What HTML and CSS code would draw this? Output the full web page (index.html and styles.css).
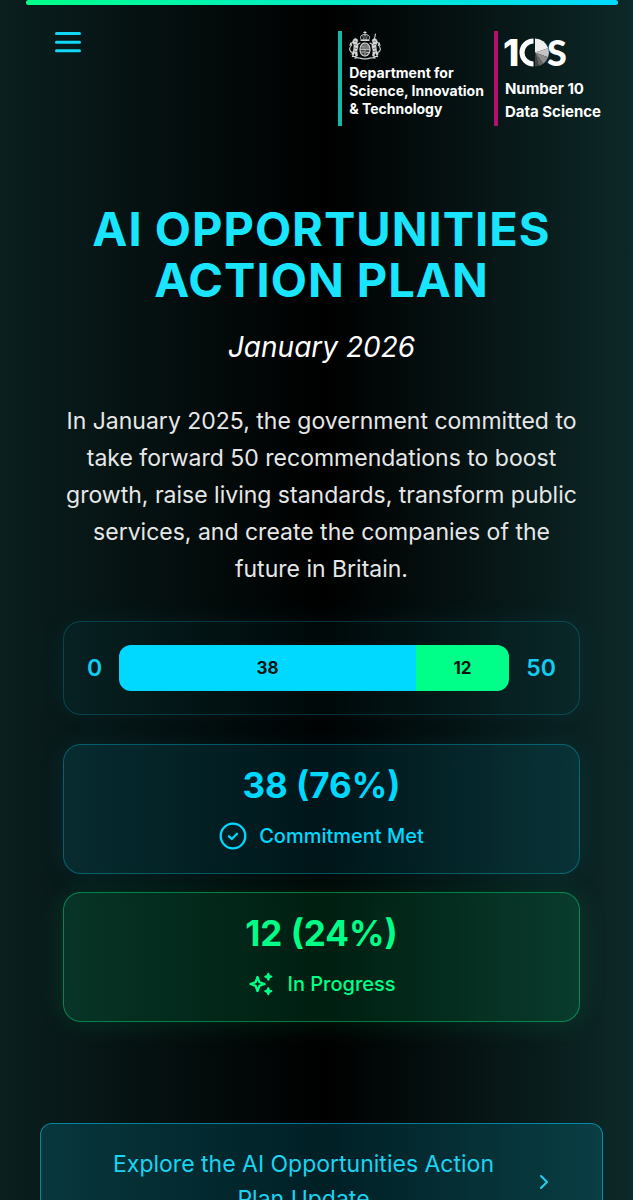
FILE: index.html
```html
<!DOCTYPE html>
<html lang="en">
<head>
  <meta charset="UTF-8" />
  <meta name="viewport" content="width=device-width, initial-scale=1.0"/>
  <title>AI Opportunities Action Plan</title>
  <link rel="stylesheet" href="styles.css">
</head>
<body>
  <div class="page">
    <div class="top-bar"></div>

    <header class="site-header">
      <button class="menu-button" type="button" aria-label="Open menu">
        <svg width="28" height="22" viewBox="0 0 28 22" fill="none" stroke="#12d6f5" stroke-width="3" stroke-linecap="round">
          <path d="M2.500 2.500h23M2.500 11.200h23M2.500 19.800h23"/>
        </svg>
      </button>

      <div class="logos">
        <div class="logo dsit">
          <svg class="crest" width="32" height="30" viewBox="0 0 32 30" fill="none" stroke="#d8d8d8" stroke-linecap="round">
            <!-- crown -->
            <path d="M16 .5v3M14.800 1.500h2.400" stroke-width="1"/>
            <path d="M12 8.500c-2-3.500 1.500-5.500 4-4.500 2.500-1 6 1 4 4.500z" stroke-width="1"/>
            <path d="M16 4v4.500M13.800 5l.7 3M18.200 5l-.7 3" stroke-width=".6"/>
            <path d="M12 9.500h8" stroke-width="1.200"/>
            <!-- shield -->
            <ellipse cx="16" cy="18.500" rx="5" ry="6.500" fill="#444" stroke-width="1.200" stroke-dasharray="1.500 .7"/>
            <path d="M16 13v11M11.500 18.500h9" stroke-width=".7"/>
            <path d="M12.800 15.200h2M17.500 15h2M12.800 17h2M17.500 17h2M12.800 21h2M17.500 21.500h2" stroke-width=".8"/>
            <!-- lion -->
            <path d="M4.500 8.500c1.500-1.800 4.500-.8 4.300 1.500l-.8 2 1.200 3-1.200 5 .5 5-1.500.5-1.300-4-2.200 2.500-.8-.7 1.800-4 .5-5-1.500-3z" fill="#d8d8d8" stroke-width=".5"/>
            <path d="M7 14.500l4-2.500M5 22l-1.500 3.500h3M3 21.500c-2.500-1-3-4-1.300-6M1 14.500l.8-2 .9 2M3.500 11.500l-2 1" stroke-width="1.100"/>
            <path d="M5.500 10.300h1.500M5.500 13.500l2 .5M5.500 17l2 .5M5.500 20l2 .5" stroke="#333" stroke-width=".6"/>
            <!-- unicorn -->
            <path d="M27.500 8.500c-1.500-1.800-4.500-.8-4.300 1.500l.8 2-1.200 3 1.200 5-.5 5 1.500.5 1.300-4 2.200 2.500.8-.7-1.800-4-.5-5 1.500-3z" fill="#d8d8d8" stroke-width=".5"/>
            <path d="M25.500 7.500l1-4.500M25 14.500l-4-2.500M27 22l1.500 3.500h-3M29 21.500c2.500-1 3-4 1.300-6M31 14.500l-.8-2-.9 2M28.500 11.500l2 1" stroke-width="1.100"/>
            <path d="M26.500 10.300h-1.500M26.500 13.500l-2 .5M26.500 17l-2 .5M26.500 20l-2 .5" stroke="#333" stroke-width=".6"/>
            <!-- scroll -->
            <path d="M6 27c3-1.500 6 1.500 10 .7 4 .800 7-2.200 10-.7" stroke-width="1.400"/>
            <path d="M9 26.800l2 .5M14 27.700h4M21 27.300l2-.5" stroke="#444" stroke-width=".5"/>
          </svg>
          <span>Department for<br>Science, Innovation<br>&amp; Technology</span>
        </div>
        <div class="logo ten-ds">
          <svg class="mark" width="72" height="32" viewBox="-4 0 72 32" role="img" aria-label="10DS">
            <text class="mark-one" x="-2" y="29">1</text>
            <path d="M28.500 4a11.500 11.500 0 0 0 0 23" fill="none" stroke="#fff" stroke-width="5"/>
            <path d="M30 15.500V1.500a14 14 0 0 1 13.300 9.700z" fill="#eee"/>
            <path d="M30 15.500l13.300-4.300a14 14 0 0 1-.2 9z" fill="#c4c4c4"/>
            <path d="M30 15.500l13.100 4.700a14 14 0 0 1-4.900 6.600z" fill="#8c8c8c"/>
            <path d="M30 15.500l8.200 11.300a14 14 0 0 1-4.500 2.200z" fill="#666"/>
            <path d="M30 15.500l3.700 13.500a14 14 0 0 1-3.700.5z" fill="#444"/>
            <text class="mark-letter" x="42" y="29">S</text>
          </svg>
          <span>Number 10<br>Data Science</span>
        </div>
      </div>
    </header>

    <main>
      <section class="hero">
        <h1>AI Opportunities Action Plan</h1>
        <p class="date">January 2026</p>
        <p class="intro">In January 2025, the government committed to take forward 50 recommendations to boost growth, raise living standards, transform public services, and create the companies of the future in Britain.</p>

        <div class="card progress-card">
          <span class="limit">0</span>
          <div class="progress">
            <div class="segment met" style="flex-grow: 38">38</div>
            <div class="segment ongoing" style="flex-grow: 12">12</div>
          </div>
          <span class="limit">50</span>
        </div>

        <div class="card stat stat-met">
          <div class="stat-value">38 (76%)</div>
          <div class="stat-label">
            <svg width="28" height="28" viewBox="0 0 28 28" fill="none" stroke="currentColor" stroke-width="2.300" stroke-linecap="round" stroke-linejoin="round">
              <circle cx="14" cy="14" r="12.300"/>
              <path d="M10 14.300l2.800 2.700 5.200-5.300"/>
            </svg>
            <span>Commitment Met</span>
          </div>
        </div>

        <div class="card stat stat-ongoing">
          <div class="stat-value">12 (24%)</div>
          <div class="stat-label">
            <svg width="28" height="28" viewBox="0 0 28 28" fill="none" stroke="currentColor" stroke-width="2.300" stroke-linejoin="round">
              <path d="M10.500 7l1.900 5.100 5.100 1.900-5.100 1.900-1.900 5.100-1.900-5.100L3.500 14l5.100-1.900z"/>
              <path d="M21.300 3.500l.9 2.300 2.300.9-2.300.9-.9 2.300-.9-2.300-2.300-.9 2.300-.9zM21.300 18l.9 2.300 2.300.9-2.300.9-.9 2.300-.9-2.300-2.300-.9 2.300-.9z" fill="currentColor" stroke-width="1.800"/>
            </svg>
            <span>In Progress</span>
          </div>
        </div>
      </section>

      <a class="explore" href="#update">
        <span>Explore the AI Opportunities Action Plan Update</span>
        <svg width="24" height="24" viewBox="0 0 24 24" fill="none" stroke="currentColor" stroke-width="2" stroke-linecap="round" stroke-linejoin="round">
          <path d="M9 6l6 6-6 6"/>
        </svg>
      </a>
    </main>
  </div>
</body>
</html>
```
FILE: styles.css
```css
* {
  box-sizing: border-box;
}

body {
  margin: 0;
  font-family: Inter, "Liberation Sans", sans-serif;
  color: #fff;
  background: linear-gradient(90deg, #0a1f1f 0%, #000 51%, #0d2828 100%);
}

.page {
  padding: 0 15px 0 26px;
}

.top-bar {
  height: 5px;
  border-radius: 4px;
  background: linear-gradient(90deg, #00ff88, #00d9ff);
}

/* header */
.site-header {
  display: flex;
  justify-content: space-between;
  align-items: flex-start;
  padding: 26px 17px 0 28px;
}

.menu-button {
  display: flex;
  padding: 0;
  border: 0;
  background: none;
  cursor: pointer;
}

.logos {
  display: flex;
  gap: 10px;
}

.logo {
  display: flex;
  flex-direction: column;
  height: 95px;
  padding-left: 7px;
  font-weight: 700;
}

.dsit {
  border-left: 4px solid #14b8a6;
  font-size: 14px;
  line-height: 18px;
}

.crest {
  margin-bottom: 3px;
}

.ten-ds {
  border-left: 4px solid #b50f72;
  font-size: 15px;
  line-height: 23px;
}

.mark {
  margin: 6px 0 8px -4px;
  fill: #fff;
}

.mark-one {
  font: 800 37px Inter, sans-serif;
}

.mark-letter {
  font: 900 36px Lato, sans-serif;
}

/* hero */
main {
  padding: 0 15px 40px 14px;
}

.hero {
  padding: 77px 23px 0;
  text-align: center;
}

h1 {
  margin: 0;
  font-size: 47px;
  line-height: 51px;
  font-weight: 700;
  letter-spacing: 1px;
  text-transform: uppercase;
  color: #1ae5ff;
}

.date {
  margin: 20px 0 34px;
  font-size: 28px;
  line-height: 44px;
  font-style: italic;
  font-weight: 400;
}

.intro {
  margin: 0 0 33px;
  font-size: 23px;
  line-height: 37px;
  color: #e6e8e8;
}

.card {
  border: 1px solid rgba(0, 217, 255, 0.3);
  border-radius: 18px;
}

.progress-card {
  display: flex;
  align-items: center;
  gap: 17px;
  margin-bottom: 29px;
  padding: 23px;
  border-color: rgba(0, 217, 255, 0.2);
  background: rgba(0, 217, 255, 0.04);
  box-shadow: 0 0 30px rgba(0, 217, 255, 0.06);
}

.limit {
  font-size: 23px;
  font-weight: 600;
  color: #12cdf0;
}

.progress {
  display: flex;
  flex: 1;
  height: 46px;
  border-radius: 12px;
  overflow: hidden;
}

.segment {
  flex-basis: 0;
  font-size: 17px;
  line-height: 46px;
  font-weight: 700;
  color: #04140f;
}

.met {
  background: #00d9ff;
}

.ongoing {
  background: #00ff88;
}

.stat {
  margin-bottom: 18px;
  padding: 17px 20px 20px;
}

.stat-met {
  color: #00d9ff;
  background: rgba(0, 217, 255, 0.1);
  box-shadow: 0 0 30px rgba(0, 217, 255, 0.08);
}

.stat-ongoing {
  color: #00ff88;
  border-color: rgba(0, 255, 136, 0.4);
  background: rgba(0, 255, 136, 0.12);
  box-shadow: 0 0 30px rgba(0, 255, 136, 0.12);
}

.stat-value {
  margin-bottom: 11px;
  font-size: 35px;
  line-height: 46px;
  font-weight: 700;
}

.stat-label {
  display: flex;
  justify-content: center;
  align-items: center;
  gap: 12px;
  font-size: 20px;
  line-height: 34px;
  font-weight: 500;
}

/* link to the full update */
.explore {
  display: flex;
  align-items: center;
  gap: 12px;
  margin-top: 101px;
  padding: 23px 46px;
  border: 1px solid rgba(0, 217, 255, 0.5);
  border-radius: 12px;
  background: rgba(0, 217, 255, 0.15);
  color: #1ad4f2;
  font-size: 23px;
  line-height: 35px;
  text-align: center;
  text-decoration: none;
}

.explore span {
  flex: 1;
}
```
